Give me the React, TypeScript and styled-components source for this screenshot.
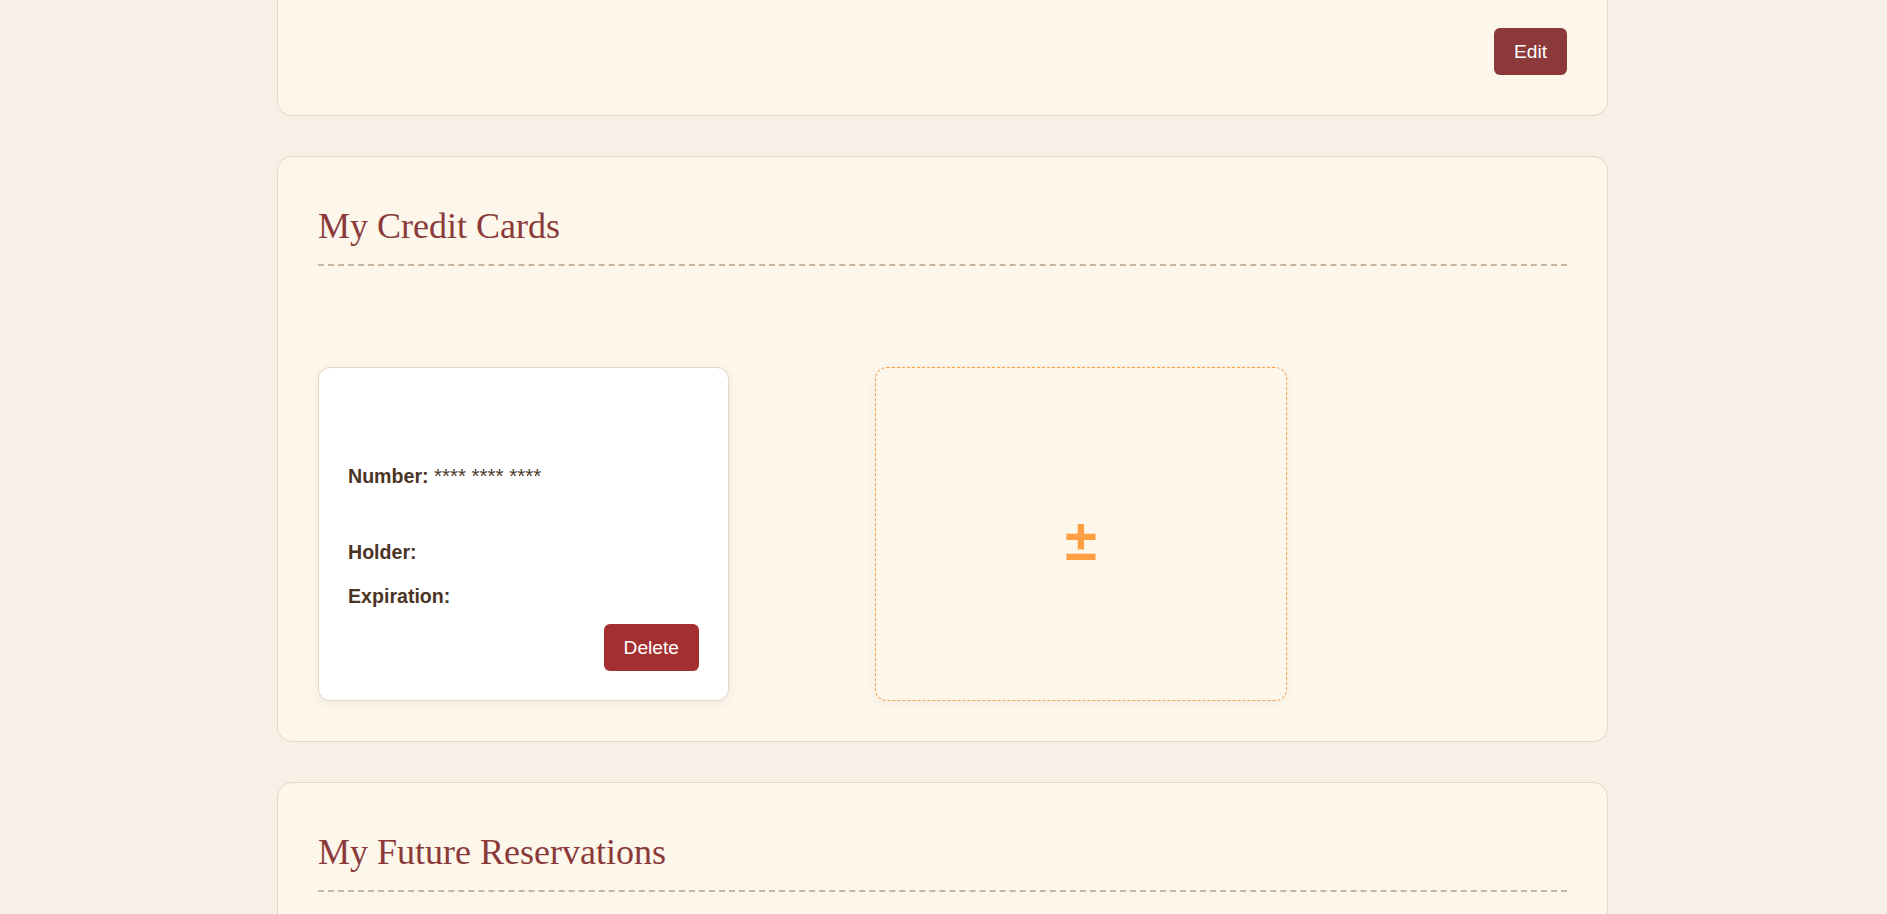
import { FC } from 'react';
import { styled, createGlobalStyle } from 'styled-components';

const GlobalStyle = createGlobalStyle`
    html, body {
        margin: 0;
        padding: 0;
        background: #f7f0e6;
        font-family: "Liberation Sans", Arial, sans-serif;
        color: #4a3426;
    }
    * {
        box-sizing: border-box;
    }
`;

const Page = styled.main`
    display: flex;
    flex-direction: column;
    align-items: center;
    gap: 40px;
    padding: 0 2px 40px 0;
    overflow: hidden;
    height: 914px;
`;

// 页面是滚动过的，第一块只露出底部
const Section = styled.section<{ $cutTop?: boolean }>`
    width: 1331px;
    flex-shrink: 0;
    padding: 40px;
    margin-top: ${props => props.$cutTop ? '-13px' : '0'};
    background: #fdf6eb;
    border: 1px solid #e4d8c4;
    border-radius: 15px;
`;

const Actions = styled.div`
    display: flex;
    justify-content: flex-end;
`;

const Button = styled.button<{ $tone?: 'edit' | 'delete' }>`
    height: 47px;
    padding: 0 20px;
    border: none;
    border-radius: 6px;
    background: ${props => props.$tone === 'delete' ? '#a32f31' : '#8b393a'};
    color: #fff;
    font-family: "Liberation Sans", Arial, sans-serif;
    font-size: 19.2px;
    cursor: pointer;
`;

const Title = styled.h2`
    margin: 9px 0 0;
    padding-bottom: 18px;
    border-bottom: 2px dashed #c9b59e;
    font-family: "Liberation Serif", "Times New Roman", serif;
    font-weight: normal;
    font-size: 36px;
    line-height: 40px;
    color: #8b3a3a;
`;

const CardGrid = styled.div`
    display: grid;
    grid-template-columns: 411px 412px;
    column-gap: 146px;
    margin-top: 101px;
`;

const CreditCard = styled.div`
    height: 334px;
    padding: 29px;
    display: flex;
    flex-direction: column;
    background: #fff;
    border: 1px solid #e2d6c6;
    border-radius: 12px;
    box-shadow: 0 2px 8px rgba(90, 60, 30, 0.08);
`;

const Field = styled.div<{ $gap: number }>`
    margin-top: ${props => props.$gap}px;
    font-size: 19.6px;
    line-height: 22px;
    color: #4a3426;
`;

const Label = styled.span`
    font-weight: bold;
`;

const Value = styled.span`
    color: #4b3b30;
    font-size: 20.5px;
`;

const CardFooter = styled.div`
    display: flex;
    justify-content: flex-end;
    margin-top: 17px;
`;

const AddCard = styled.button`
    height: 334px;
    display: flex;
    align-items: center;
    justify-content: center;
    padding-top: 12px;
    background: #fdf6eb;
    border: 1px dashed #fb9f45;
    border-radius: 12px;
    box-shadow: 0 2px 8px rgba(90, 60, 30, 0.06);
    cursor: pointer;
`;

const PlusMinus = styled.span`
    font-family: "Liberation Sans", Arial, sans-serif;
    font-weight: bold;
    font-size: 58px;
    line-height: 1;
    color: #ff9f43;
`;

interface CardProps {
    number: string;
    holder: string;
    expiration: string;
}

const CardItem: FC<CardProps> = ({ number, holder, expiration }) => (
    <CreditCard>
        <Field $gap={68}><Label>Number:</Label> <Value>{number}</Value></Field>
        <Field $gap={54}><Label>Holder:</Label> <Value>{holder}</Value></Field>
        <Field $gap={22}><Label>Expiration:</Label> <Value>{expiration}</Value></Field>
        <CardFooter>
            <Button $tone="delete">Delete</Button>
        </CardFooter>
    </CreditCard>
);

export default function App() {
    return (
        <>
            <GlobalStyle />
            <Page>
                <Section $cutTop>
                    <Actions>
                        <Button $tone="edit">Edit</Button>
                    </Actions>
                </Section>

                <Section>
                    <Title>My Credit Cards</Title>
                    <CardGrid>
                        <CardItem number="**** **** ****" holder="" expiration="" />
                        <AddCard aria-label="Add card">
                            <PlusMinus>±</PlusMinus>
                        </AddCard>
                    </CardGrid>
                </Section>

                <Section>
                    <Title>My Future Reservations</Title>
                </Section>
            </Page>
        </>
    );
}
